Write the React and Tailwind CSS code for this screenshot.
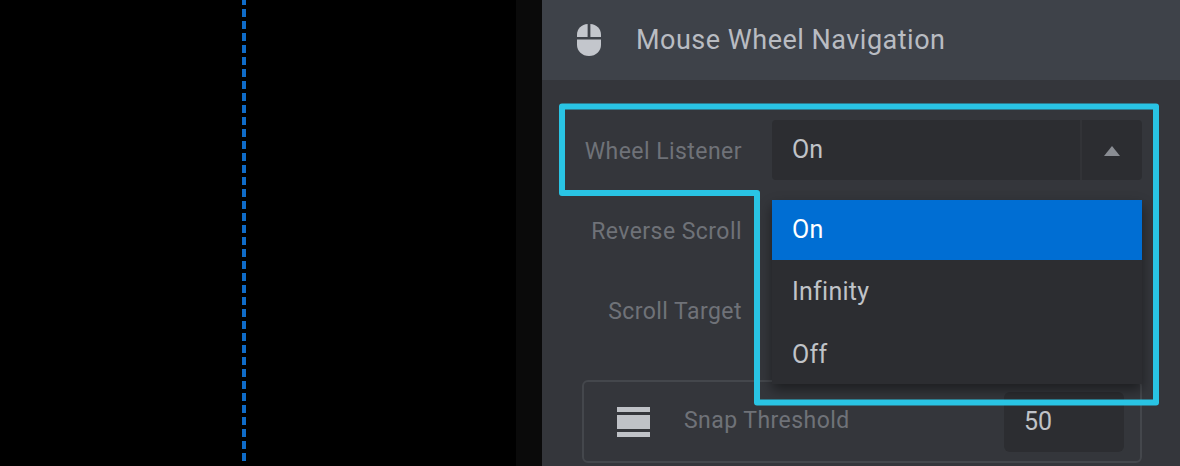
import React from "react";

const font = { fontFamily: "Roboto, sans-serif" };

const Row = ({ label, value, open }) => (
  <div className="flex items-center h-[60px]">
    <div className="w-[190px] pr-[30px] pt-[4px] text-right text-[23px] text-[#6f7278] tracking-[0.45px] whitespace-nowrap">
      {label}
    </div>
    <div className="flex-1 h-full flex items-center bg-[#2c2d31] rounded-[4px]">
      <div className="flex-1 pl-5 text-[25px] text-[#c0c3c8]">{value}</div>
      <div className="w-[62px] h-full pr-[1px] pt-[1px] flex items-center justify-center border-l-2 border-[#323337]">
        <div
          className={
            open
              ? "w-0 h-0 border-x-[8px] border-x-transparent border-b-[10px] border-b-[#8a8d93]"
              : "w-0 h-0 border-x-[8px] border-x-transparent border-t-[10px] border-t-[#8a8d93]"
          }
        />
      </div>
    </div>
  </div>
);

const App = () => {
  return (
    <div className="relative w-[1180px] h-[466px] flex overflow-hidden bg-black" style={font}>
      {/* Canvas side */}
      <div className="w-[516px] h-full pl-[242px]">
        <div className="w-1 h-[462px] bg-[repeating-linear-gradient(to_bottom,#0f6cc8_0px,#0f6cc8_5px,#000000_5px,#000000_9px,#0f6cc8_9px,#0f6cc8_12px)]" />
      </div>
      <div className="w-[26px] h-full bg-[#0a0a0a]" />

      {/* Panel */}
      <div className="flex-1 bg-[#34363b]">
        <div className="h-20 bg-[#3e4249] flex items-center pl-[35px]">
          <svg width="24" height="32" viewBox="0 0 24 32" className="shrink-0">
            <path d="M10.6 0v13H0V10.5C0 4.8 4.6.2 10.6 0z" fill="#c3c6cc" />
            <path d="M13.4 0v13H24V10.5C24 4.8 19.4.2 13.4 0z" fill="#c3c6cc" />
            <path d="M0 15.5h24V21c0 6-5 11-12 11S0 27 0 21z" fill="#c3c6cc" />
          </svg>
          <div className="ml-[35px] text-[27px] text-[#b9bcc2] tracking-[0.5px] whitespace-nowrap">
            Mouse Wheel Navigation
          </div>
        </div>

        <div className="pt-10 pl-10 pr-[38px] flex flex-col gap-5">
          <Row label="Wheel Listener" value="On" open />
          <Row label="Reverse Scroll" />
          <Row label="Scroll Target" />

          <div className="mt-5 h-[83px] flex items-center border-2 border-[#44474c] rounded-[6px]">
            <svg width="33" height="30" viewBox="0 0 33 30" className="ml-[33px] shrink-0">
              <rect x="0" y="0" width="33" height="5" fill="#bfc2c7" />
              <rect x="0" y="8" width="33" height="14" fill="#bfc2c7" />
              <rect x="0" y="25" width="33" height="5" fill="#bfc2c7" />
            </svg>
            <div className="ml-[34px] flex-1 text-[23px] text-[#6f7278] tracking-[0.45px]">Snap Threshold</div>
            <div className="w-[120px] h-[60px] mr-4 pl-5 flex items-center bg-[#2c2d31] rounded-[6px] text-[25px] text-[#c0c3c8]">
              50
            </div>
          </div>
        </div>
      </div>

      {/* Open select menu */}
      <div className="absolute left-[772px] top-[200px] w-[370px] bg-[#2c2d31] text-[25px] text-[#c0c3c8] tracking-[0.25px] shadow-[0_6px_12px_rgba(0,0,0,0.45)]">
        <div className="h-[60px] pl-5 flex items-center bg-[#006ed3] text-white">On</div>
        <div className="h-16 pl-5 flex items-center">Infinity</div>
        <div className="h-[60px] pl-5 pt-[2px] flex items-center">Off</div>
      </div>

      {/* Highlight outline */}
      <svg width="1180" height="466" viewBox="0 0 1180 466" className="absolute inset-0 pointer-events-none">
        <path
          d="M562 106.5H1156V402.5H757V193H562Z"
          fill="none"
          stroke="#29c4e4"
          strokeWidth="6"
          strokeLinejoin="round"
        />
      </svg>
    </div>
  );
};

export default App;
